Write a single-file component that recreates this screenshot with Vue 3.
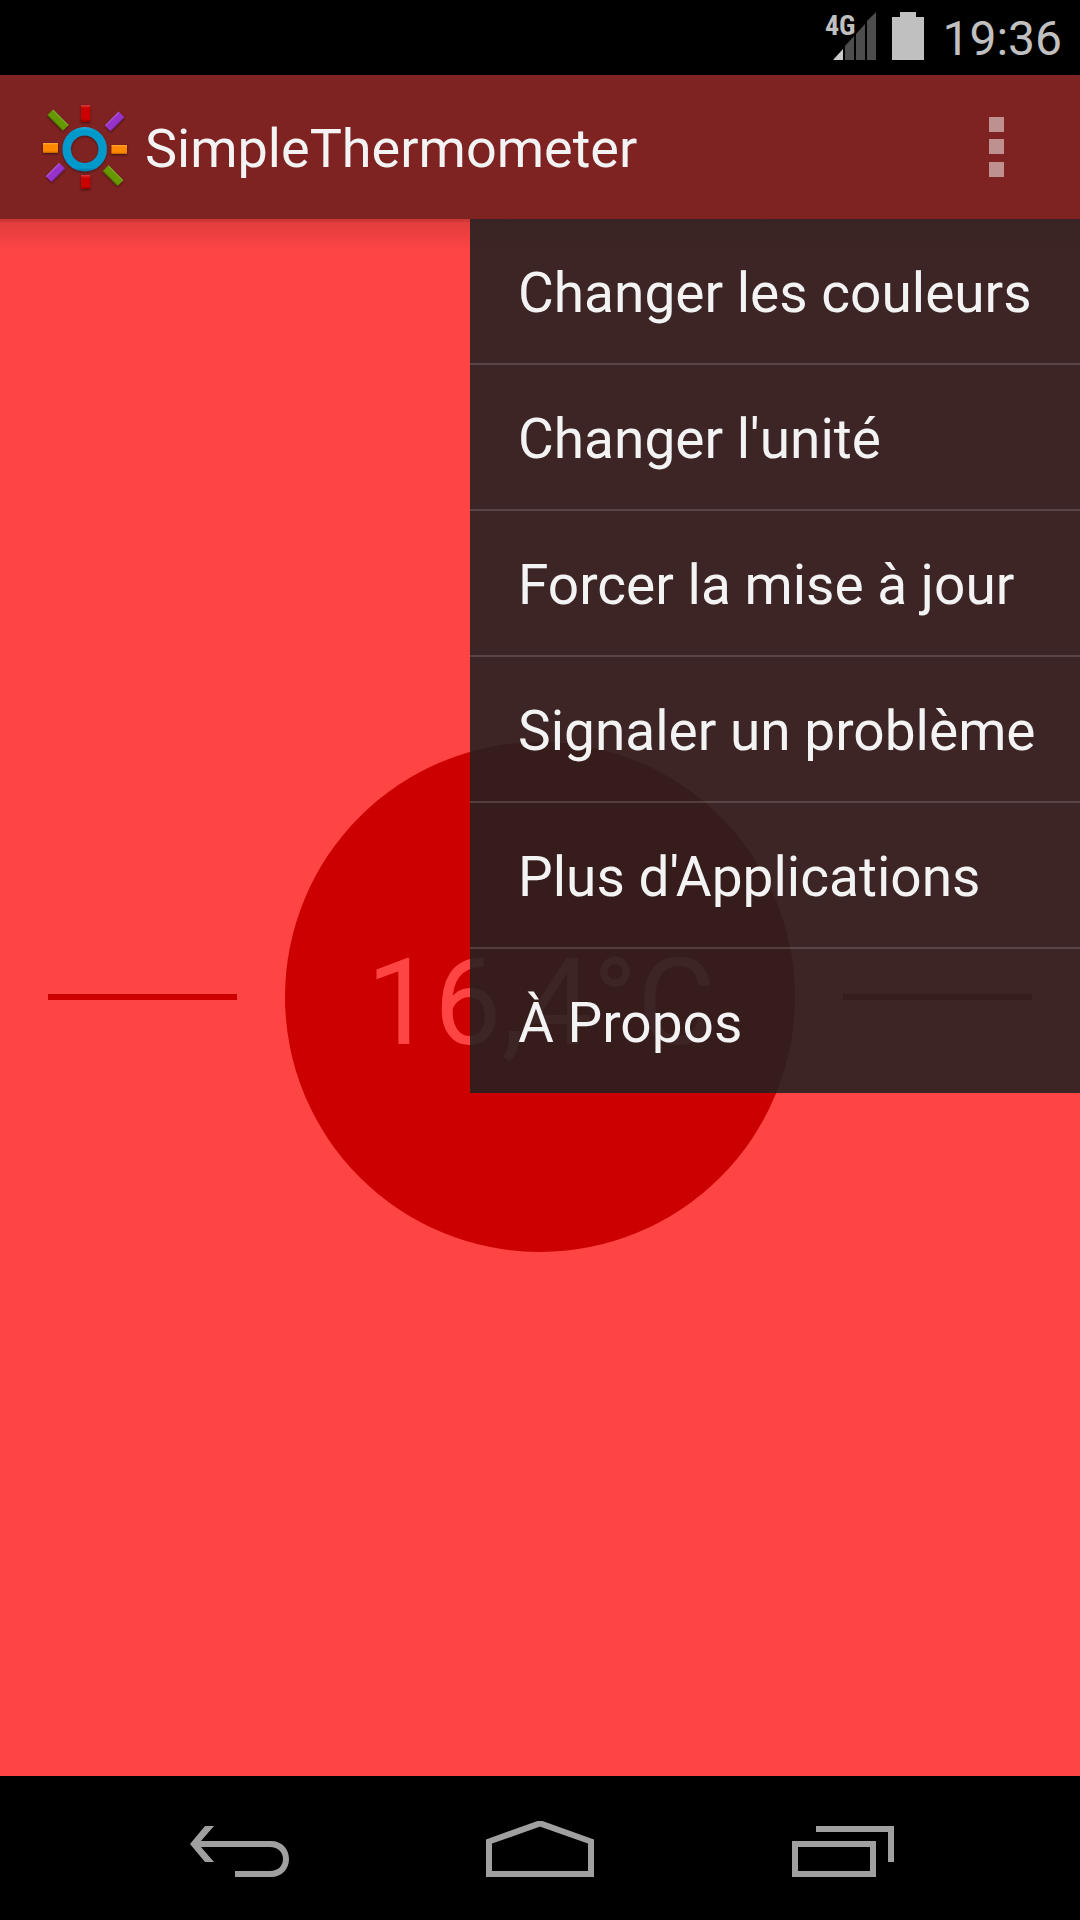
<script setup>
import { ref } from 'vue'

const menuOpen = ref(true)
const temperature = '16,4°C'
const menuItems = [
  'Changer les couleurs',
  "Changer l'unité",
  'Forcer la mise à jour',
  'Signaler un problème',
  "Plus d'Applications",
  'À Propos',
]
</script>

<template>
  <div class="screen">
    <div class="status-bar">
      <span class="network">4G</span>
      <svg class="signal" width="44" height="48" viewBox="0 0 44 48" aria-hidden="true">
        <path d="M0 48 L10 37 V48 Z" fill="#cbcbcb" />
        <path d="M12 34 L21 24 V48 H12 Z M23 22 L32 12 V48 H23 Z M34 9 L43 0 V48 H34 Z" fill="#4d4d4d" />
      </svg>
      <svg class="battery" width="32" height="48" viewBox="0 0 32 48" aria-hidden="true">
        <path d="M8 0 H24 V5 H32 V48 H0 V5 H8 Z" fill="#c0c0c0" />
      </svg>
      <time class="clock">19:36</time>
    </div>

    <header class="action-bar">
      <svg class="logo" width="96" height="96" viewBox="36 99 96 96" aria-hidden="true">
        <defs>
          <filter id="relief" x="-20%" y="-20%" width="140%" height="140%">
            <feDropShadow dx="0" dy="1" stdDeviation="1" flood-color="#000" flood-opacity="0.5" />
          </filter>
          <linearGradient id="shade" x1="0" y1="0" x2="0" y2="1">
            <stop offset="0" stop-color="#fff" stop-opacity="0.25" />
            <stop offset="0.2" stop-color="#fff" stop-opacity="0" />
            <stop offset="0.8" stop-color="#000" stop-opacity="0" />
            <stop offset="1" stop-color="#000" stop-opacity="0.3" />
          </linearGradient>
          <linearGradient id="ring" x1="0" y1="127" x2="0" y2="172" gradientUnits="userSpaceOnUse">
            <stop offset="0" stop-color="#2fabd8" />
            <stop offset="0.08" stop-color="#0099cc" />
            <stop offset="0.9" stop-color="#0099cc" />
            <stop offset="1" stop-color="#006f98" />
          </linearGradient>
        </defs>
        <g filter="url(#relief)">
          <circle cx="84.7" cy="149.2" r="18" fill="none" stroke="url(#ring)" stroke-width="8.4" />
          <rect x="81" y="105" width="9.2" height="17" fill="#cc0000" />
          <rect x="81" y="175" width="9.2" height="14" fill="#cc0000" />
          <rect x="43" y="143" width="15" height="10" fill="#ff8800" />
          <rect x="111.5" y="145" width="15.5" height="9" fill="#ff8800" />
          <rect x="47" y="116" width="22" height="8.3" fill="#669900" transform="rotate(45 58 120.1)" />
          <rect x="102.5" y="171.5" width="21" height="8.3" fill="#669900" transform="rotate(45 113 175.6)" />
          <rect x="105" y="117.3" width="19.5" height="8.3" fill="#9933cc" transform="rotate(-45 114.7 121.5)" />
          <rect x="46" y="168.3" width="19" height="8.3" fill="#9933cc" transform="rotate(-45 55.5 172.5)" />
          <rect x="81" y="105" width="9.2" height="17" fill="url(#shade)" />
          <rect x="81" y="175" width="9.2" height="14" fill="url(#shade)" />
          <rect x="43" y="143" width="15" height="10" fill="url(#shade)" />
          <rect x="111.5" y="145" width="15.5" height="9" fill="url(#shade)" />
          <rect x="47" y="116" width="22" height="8.3" fill="url(#shade)" transform="rotate(45 58 120.1)" />
          <rect x="102.5" y="171.5" width="21" height="8.3" fill="url(#shade)" transform="rotate(45 113 175.6)" />
          <rect x="105" y="117.3" width="19.5" height="8.3" fill="url(#shade)" transform="rotate(-45 114.7 121.5)" />
          <rect x="46" y="168.3" width="19" height="8.3" fill="url(#shade)" transform="rotate(-45 55.5 172.5)" />
        </g>
      </svg>
      <h1 class="title">SimpleThermometer</h1>
      <button
        class="overflow"
        type="button"
        aria-label="Plus d'options"
        :aria-expanded="menuOpen"
        @click="menuOpen = !menuOpen"
      >
        <svg width="16" height="60" viewBox="0 0 16 60" aria-hidden="true">
          <path d="M1 0 H16 V15 H1 Z M1 22 H16 V37 H1 Z M1 45 H16 V60 H1 Z" fill="#be9090" />
        </svg>
      </button>

      <ul v-if="menuOpen" class="menu">
        <li v-for="item in menuItems" :key="item" class="menu-row">
          <button class="menu-item" type="button">{{ item }}</button>
        </li>
      </ul>
    </header>

    <main class="content">
      <span class="line"></span>
      <div class="dial">{{ temperature }}</div>
      <span class="line"></span>
    </main>

    <nav class="nav-bar">
      <button class="nav-button" type="button" aria-label="Retour">
        <svg width="108" height="60" viewBox="0 0 108 60" aria-hidden="true">
          <path d="M4 23 L19 5 H28 L15 20 H85 C96 20 103 28 103 38 C103 48 96 56 85 56 H49 V50 H84 C92 50 97 45 97 38 C97 31 92 26 84 26 H15 L28 41 H19 Z" fill="#a0a0a0" />
        </svg>
      </button>
      <button class="nav-button" type="button" aria-label="Accueil">
        <svg width="108" height="60" viewBox="0 0 108 60" aria-hidden="true">
          <path d="M3 53 V20.5 L54 2.3 L105 20.5 V53 Z" fill="none" stroke="#a0a0a0" stroke-width="6" />
        </svg>
      </button>
      <button class="nav-button" type="button" aria-label="Applications récentes">
        <svg width="108" height="60" viewBox="0 0 108 60" aria-hidden="true">
          <path d="M9 23 H87 V53 H9 Z M30 8 H105 V41" fill="none" stroke="#a0a0a0" stroke-width="6" />
        </svg>
      </button>
    </nav>
  </div>
</template>

<style>
body {
  margin: 0;
  background: #000;
}
</style>

<style scoped>
.screen {
  display: flex;
  flex-direction: column;
  min-height: 100vh;
  background: #ff4444;
  font-family: Roboto, sans-serif;
}

button {
  box-sizing: border-box;
  margin: 0;
  padding: 0;
  border: 0;
  background: none;
  font: inherit;
  color: inherit;
  cursor: pointer;
}

svg {
  display: block;
  flex: none;
}

.status-bar {
  box-sizing: border-box;
  display: flex;
  justify-content: flex-end;
  align-items: flex-start;
  height: 75px;
  padding: 12px 18px 0 0;
  background: #000;
  color: #c0c0c0;
}

.network {
  margin-right: -22px;
  font: bold 28px/28px "Liberation Sans Narrow", "Roboto Condensed", Roboto, sans-serif;
}

.signal {
  margin-right: 15px;
}

.battery {
  margin-right: 18px;
}

.clock {
  font-size: 48px;
  line-height: 54px;
}

.action-bar {
  position: relative;
  z-index: 1;
  display: flex;
  align-items: center;
  height: 144px;
  padding-left: 36px;
  background: #7e2222;
  color: #f3f3f3;
}

.title {
  flex: 1;
  margin: 0;
  padding: 4px 0 0 13px;
  font-size: 54px;
  font-weight: 400;
  line-height: 64px;
}

.overflow {
  display: flex;
  justify-content: center;
  align-items: center;
  width: 168px;
  height: 144px;
}

.menu {
  position: absolute;
  top: 100%;
  right: 0;
  width: 610px;
  margin: 0;
  padding: 0;
  list-style: none;
  background: rgba(32, 32, 32, 0.87);
}

.menu-row + .menu-row {
  border-top: 2px solid rgba(255, 255, 255, 0.15);
}

.menu-item {
  display: block;
  width: 100%;
  height: 144px;
  padding: 4px 48px 0;
  font-size: 55px;
  line-height: 64px;
  text-align: left;
  white-space: nowrap;
}

.content {
  flex: 1;
  display: flex;
  align-items: center;
  gap: 48px;
  padding: 0 48px 1px;
  background:
    linear-gradient(rgba(0, 0, 0, 0.08), rgba(0, 0, 0, 0.08)) top / 100% 3px no-repeat,
    linear-gradient(rgba(0, 0, 0, 0.13), rgba(0, 0, 0, 0)) top / 100% 32px no-repeat,
    #ff4444;
}

.line {
  flex: 1;
  height: 6px;
  background: #cc0000;
}

.dial {
  box-sizing: border-box;
  display: flex;
  justify-content: center;
  align-items: center;
  width: 510px;
  height: 510px;
  padding: 12px 0 0 2px;
  border-radius: 50%;
  background: #cc0000;
  color: #ff4444;
  font-size: 120px;
  line-height: 144px;
}

.nav-bar {
  box-sizing: border-box;
  display: flex;
  height: 144px;
  padding: 6px 90px 0;
  background: #000;
}

.nav-button {
  flex: 1;
  display: flex;
  justify-content: center;
  align-items: center;
}
</style>
